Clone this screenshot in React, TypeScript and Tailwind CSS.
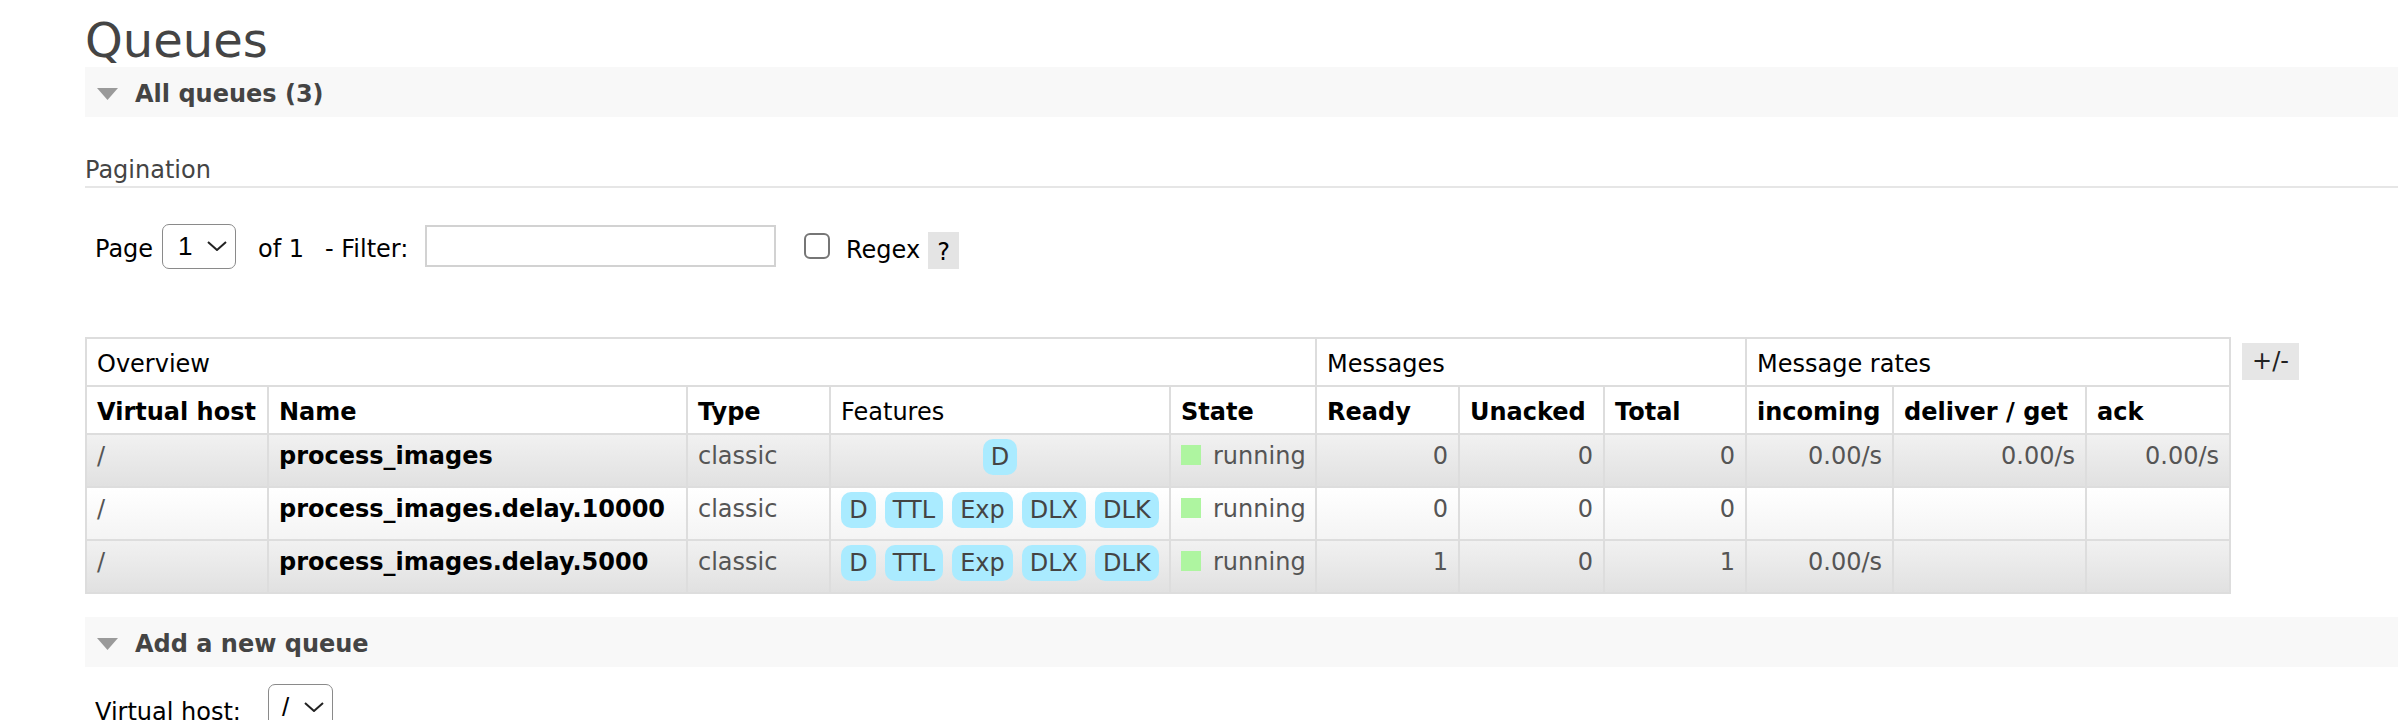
import React from "react";

const Triangle = () => (
  <svg width="21" height="12" viewBox="0 0 21 12" className="shrink-0">
    <polygon points="0,0 21,0 10.5,12" fill="#9a9a9a" />
  </svg>
);

const Chevron = () => (
  <svg width="20" height="10" viewBox="0 0 20 10" className="shrink-0">
    <polyline points="1,1 10,9 19,1" fill="none" stroke="#222" strokeWidth="2" />
  </svg>
);

const SectionBar = ({ title }: { title: string }) => (
  <div className="flex items-center h-[50px] pt-[3px] pl-[12px] bg-[#f8f8f8]">
    <Triangle />
    <span className="ml-[17px] text-[24px] leading-[28px] font-bold text-[#444] whitespace-nowrap">{title}</span>
  </div>
);

type Row = {
  name: string;
  features: string[];
  ready: string;
  unacked: string;
  total: string;
  incoming: string;
  deliver: string;
  ack: string;
  alt: boolean;
};

const rows: Row[] = [
  { name: "process_images", features: ["D"], ready: "0", unacked: "0", total: "0", incoming: "0.00/s", deliver: "0.00/s", ack: "0.00/s", alt: true },
  { name: "process_images.delay.10000", features: ["D", "TTL", "Exp", "DLX", "DLK"], ready: "0", unacked: "0", total: "0", incoming: "", deliver: "", ack: "", alt: false },
  { name: "process_images.delay.5000", features: ["D", "TTL", "Exp", "DLX", "DLK"], ready: "1", unacked: "0", total: "1", incoming: "0.00/s", deliver: "", ack: "", alt: true },
];

const colWidths = [182, 419, 143, 340, 146, 143, 145, 142, 147, 193, 144];

export default function App() {
  const th = "border-2 border-[#ddd] px-[10px] pt-[10px] pb-[6px] text-left leading-[30px] text-[24px] text-black whitespace-nowrap bg-white";
  const thb = th + " font-bold";
  const thn = th + " font-normal";
  return (
    <div className="min-h-[720px] bg-white pl-[85px] font-['DejaVu_Sans',Verdana,sans-serif] text-[24px]">
      <h1 className="pt-[13px] text-[48px] leading-[54px] text-[#444] font-normal">Queues</h1>
      <SectionBar title="All queues (3)" />

      <div className="mt-[38px] pb-[1px] border-b-2 border-[#e6e6e6] leading-[30px] text-[#444]">Pagination</div>

      <div className="mt-[34px] h-[48px] flex items-center pl-[10px] text-black leading-[30px] whitespace-nowrap">
        <span className="w-[67px] pt-[6px]">Page</span>
        <div className="w-[74px] h-[45px] border-[1.5px] border-[#8a8a8a] rounded-[7px] flex items-center pl-[15px] pr-[8px] justify-between">
          <span className="font-['Liberation_Sans',Arial,sans-serif] text-[26px] leading-[30px]">1</span>
          <Chevron />
        </div>
        <span className="ml-[22px] w-[67px] pt-[6px]">of 1</span>
        <span className="w-[100px] pt-[6px]">- Filter:</span>
        <div className="w-[351px] h-[42px] border-2 border-[#d2d2d2] bg-white" />
        <div className="ml-[28px] w-[26px] h-[26px] border-2 border-[#767676] rounded-[6px] bg-white" />
        <span className="ml-[16px] w-[82px] pt-[8px]">Regex</span>
        <span className="mt-[9px] w-[31px] h-[37px] bg-[#e4e4e4] flex items-center justify-center pt-[2px]">?</span>
      </div>

      <div className="mt-[67px] flex items-start">
        <table className="border-collapse table-fixed w-[2144px] border-2 border-[#ddd]">
          <colgroup>
            {colWidths.map((w, i) => (
              <col key={i} style={{ width: w }} />
            ))}
          </colgroup>
          <thead>
            <tr>
              <th colSpan={5} className={thn}>Overview</th>
              <th colSpan={3} className={thn}>Messages</th>
              <th colSpan={3} className={thn}>Message rates</th>
            </tr>
            <tr>
              <th className={thb}>Virtual host</th>
              <th className={thb}>Name</th>
              <th className={thb}>Type</th>
              <th className={thn}>Features</th>
              <th className={thb}>State</th>
              <th className={thb}>Ready</th>
              <th className={thb}>Unacked</th>
              <th className={thb}>Total</th>
              <th className={thb}>incoming</th>
              <th className={thb}>deliver / get</th>
              <th className={thb}>ack</th>
            </tr>
          </thead>
          <tbody>
            {rows.map((r, i) => {
              const bg = r.alt
                ? "bg-linear-to-b from-[#f1f1f1] to-[#e1e1e1]"
                : "bg-linear-to-b from-[#ffffff] to-[#f4f4f4]";
              const td = `border-2 border-[#ddd] px-[10px] pt-[6px] align-top leading-[30px] text-[24px] text-[#555] whitespace-nowrap ${bg}`;
              const tdr = td + " text-right";
              return (
                <tr key={i} className="h-[53px]">
                  <td className={td}>/</td>
                  <td className={td + " !text-black font-bold"}>{r.name}</td>
                  <td className={td}>classic</td>
                  <td className={`border-2 border-[#ddd] px-[10px] pt-[4px] align-top ${bg}`}>
                    <div className="flex justify-center gap-[9px]">
                      {r.features.map((f) => (
                        <span key={f} className="h-[36px] leading-[36px] px-[8px] rounded-[10px] bg-[#aaebff] text-[#444] text-[24px]">
                          {f}
                        </span>
                      ))}
                    </div>
                  </td>
                  <td className={td}>
                    <span className="inline-block w-[20px] h-[20px] bg-[#aef5a0] mr-[12px] align-[-1px]" />
                    running
                  </td>
                  <td className={tdr}>{r.ready}</td>
                  <td className={tdr}>{r.unacked}</td>
                  <td className={tdr}>{r.total}</td>
                  <td className={tdr}>{r.incoming}</td>
                  <td className={tdr}>{r.deliver}</td>
                  <td className={tdr}>{r.ack}</td>
                </tr>
              );
            })}
          </tbody>
        </table>
        <span className="ml-[11px] mt-[6px] h-[37px] px-[10px] bg-[#e6e6e6] leading-[37px] text-[#222] whitespace-nowrap">+/-</span>
      </div>

      <div className="mt-[23px]">
        <SectionBar title="Add a new queue" />
      </div>

      <div className="mt-[17px] flex items-start pl-[10px] text-black whitespace-nowrap">
        <span className="mt-[13px] w-[173px] leading-[30px]">Virtual host:</span>
        <div className="w-[65px] h-[45px] border-[1.5px] border-[#8a8a8a] rounded-[7px] flex items-center pl-[13px] pr-[8px] justify-between">
          <span className="font-['Liberation_Sans',Arial,sans-serif] text-[26px] leading-[30px]">/</span>
          <Chevron />
        </div>
      </div>
    </div>
  );
}
